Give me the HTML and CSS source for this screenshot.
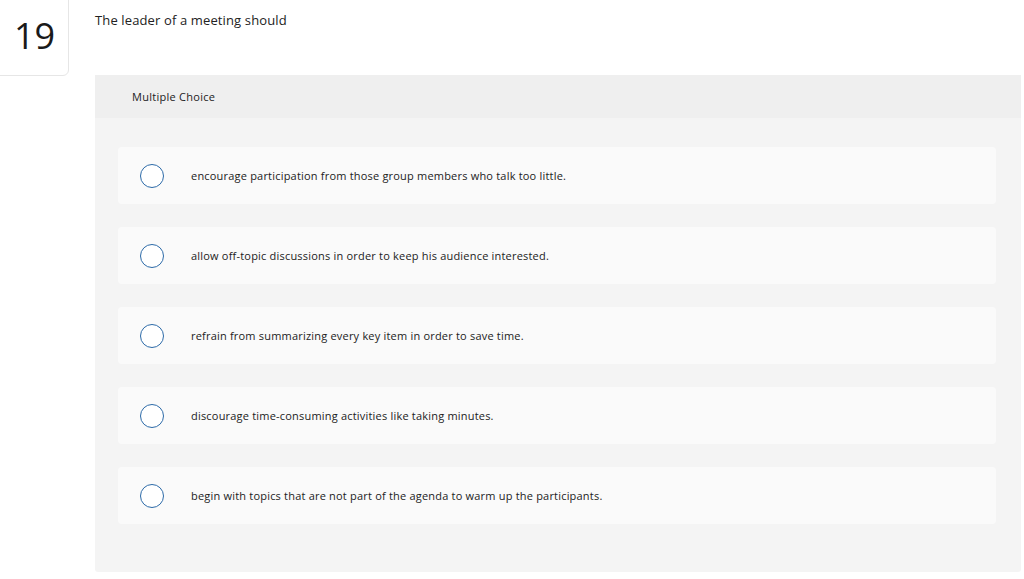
FILE: index.html
```html
<!DOCTYPE html>
<html>
<head>
<meta charset="utf-8">
<link rel="stylesheet" href="styles.css">
</head>
<body>
<div class="page">
  <div class="qnum">19</div>
  <div class="main">
    <div class="prompt">The leader of a meeting should</div>
    <div class="panel">
      <div class="panel-head">Multiple Choice</div>
      <div class="choices">
        <div class="choice"><span class="radio"></span><span class="label">encourage participation from those group members who talk too little.</span></div>
        <div class="choice"><span class="radio"></span><span class="label">allow off-topic discussions in order to keep his audience interested.</span></div>
        <div class="choice"><span class="radio"></span><span class="label">refrain from summarizing every key item in order to save time.</span></div>
        <div class="choice"><span class="radio"></span><span class="label">discourage time-consuming activities like taking minutes.</span></div>
        <div class="choice"><span class="radio"></span><span class="label">begin with topics that are not part of the agenda to warm up the participants.</span></div>
      </div>
    </div>
  </div>
</div>
</body>
</html>
```

FILE: styles.css
```css
html, body {
  margin: 0;
  padding: 0;
  background: #ffffff;
  font-family: "Open Sans", Lato, "Liberation Sans", sans-serif;
  color: #222;
}
.page {
  display: flex;
  align-items: flex-start;
}
.qnum {
  box-sizing: border-box;
  width: 70px;
  height: 77px;
  margin-left: -1px;
  margin-top: -1px;
  border: 1px solid #e6e6e6;
  border-radius: 0 0 6px 0;
  display: flex;
  align-items: center;
  justify-content: center;
  padding-bottom: 4px;
  font-size: 36px;
  font-weight: 400;
  color: #1a1a1a;
  padding-left: 1px;
}
.main {
  margin-left: 26px;
  width: 926px;
}
.prompt {
  font-size: 13px;
  line-height: 16px;
  letter-spacing: 0.13px;
  padding-top: 12px;
  height: 75px;
  box-sizing: border-box;
  color: #222;
}
.panel {
  background: #f4f4f4;
  border-radius: 0 0 3px 3px;
}
.panel-head {
  background: #efefef;
  height: 43px;
  display: flex;
  align-items: center;
  padding-left: 37px;
  font-size: 11px;
  letter-spacing: 0.27px;
  color: #222;
}
.choices {
  display: flex;
  flex-direction: column;
  gap: 23px;
  padding: 29px 25px 48px 23px;
}
.choice {
  height: 57px;
  background: #fafafa;
  border-radius: 4px;
  display: flex;
  align-items: center;
  padding-left: 22px;
}
.radio {
  box-sizing: border-box;
  width: 24px;
  height: 24px;
  border: 1.5px solid #2c6aa8;
  border-radius: 50%;
  background: #fff;
  flex: none;
}
.label {
  margin-left: 27px;
  font-size: 11px;
  letter-spacing: 0.2px;
  color: #222;
}
```
